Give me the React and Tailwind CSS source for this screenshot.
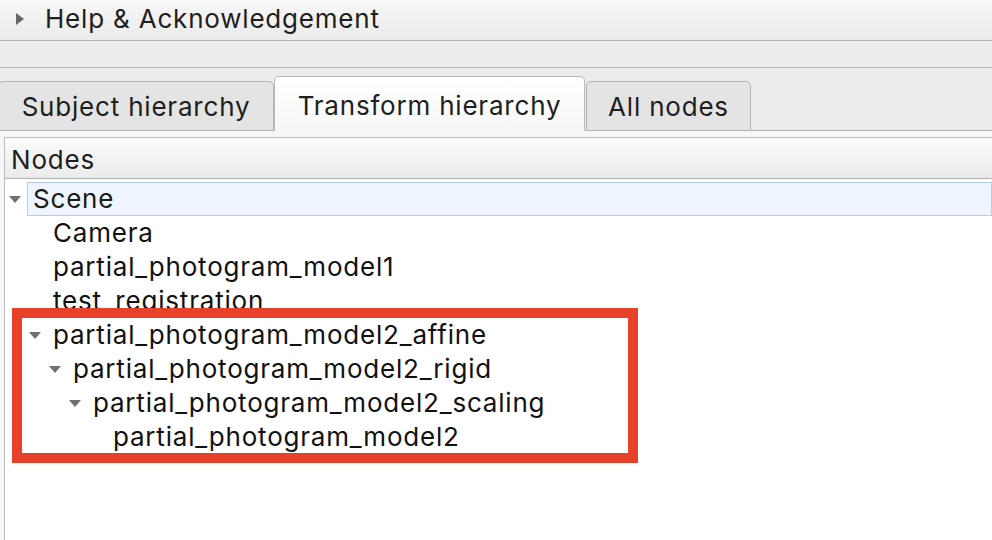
import React from 'react'

const FONT = { fontFamily: 'Inter, "Liberation Sans", sans-serif' }

const ROWS = [
  { label: 'Scene', level: 0, open: true, selected: true },
  { label: 'Camera', level: 1 },
  { label: 'partial_photogram_model1', level: 1 },
  { label: 'test_registration', level: 1 },
  { label: 'partial_photogram_model2_affine', level: 1, open: true },
  { label: 'partial_photogram_model2_rigid', level: 2, open: true },
  { label: 'partial_photogram_model2_scaling', level: 3, open: true },
  { label: 'partial_photogram_model2', level: 4 },
]

function DownArrow() {
  return (
    <svg width="12" height="7" viewBox="0 0 12 7" className="shrink-0">
      <path d="M0 0 L12 0 L6 7 Z" fill="#707070" />
    </svg>
  )
}

function Row({ row }) {
  const indent = row.level * 20
  return (
    <div className="flex items-center h-[34px]" style={{ paddingLeft: indent + 4 }}>
      <div className="w-[18px] flex items-center">{row.open && <DownArrow />}</div>
      {row.selected ? (
        <div className="flex-1 h-[34px] flex items-center pl-[5px] bg-[#eef5fe] border border-[#b4cdee] text-[#1a1a1a]">
          {row.label}
        </div>
      ) : (
        <div className="pl-[6px] text-[#111]">{row.label}</div>
      )}
    </div>
  )
}

export default function App() {
  return (
    <div
      className="relative w-[992px] h-[540px] overflow-hidden bg-[#ececec] flex flex-col text-[26px] leading-none tracking-[0.8px]"
      style={FONT}
    >
      {/* collapsible header */}
      <div className="h-[41px] shrink-0 flex items-center border-b border-[#b3b3b3] bg-gradient-to-b from-[#f7f7f7] to-[#ebebeb]">
        <svg width="8" height="12" viewBox="0 0 8 12" className="ml-[16px] mr-[21px] mt-[-2px]">
          <path d="M0 0 L8 6 L0 12 Z" fill="#666" />
        </svg>
        <span className="text-[#1e1e1e] mt-[-2px]">Help &amp; Acknowledgement</span>
      </div>
      <div className="h-[27px] shrink-0 border-b border-[#b8b8b8] bg-[#ececec]" />

      {/* tabs */}
      <div className="h-[63px] shrink-0 flex items-end">
        <div className="-ml-[2px] w-[276px] h-[50px] flex items-center justify-center pt-[2px] bg-[#e4e4e4] border border-[#b2b2b2] rounded-t-[5px] text-[#1e1e1e]">
          Subject hierarchy
        </div>
        <div className="w-[311px] h-[55px] flex items-center justify-center pt-[4px] bg-gradient-to-b from-white to-[#f7f7f7] border border-b-0 border-[#b8b8b8] rounded-t-[5px] text-[#1e1e1e]">
          Transform hierarchy
        </div>
        <div className="ml-[1px] w-[165px] h-[50px] flex items-center justify-center pt-[2px] bg-[#e4e4e4] border border-[#b2b2b2] rounded-t-[5px] text-[#1e1e1e]">
          All nodes
        </div>
        <div className="flex-1 h-[1px] bg-[#b2b2b2]" />
      </div>

      {/* tab body */}
      <div className="flex-1 bg-[#f7f7f7] pt-[6px] pl-[4px]">
        <div className="h-full bg-white border-l border-t border-[#bdbdbd]">
          <div className="h-[41px] flex items-center pl-[6px] pt-[4px] border-b border-[#b0b0b0] bg-gradient-to-b from-[#fbfbfb] to-[#ebebeb] text-[#1e1e1e]">
            Nodes
          </div>
          <div className="pt-[3px]">
            {ROWS.map((r) => (
              <Row key={r.label} row={r} />
            ))}
          </div>
        </div>
      </div>

      {/* annotation box */}
      <div className="absolute left-[12px] top-[308px] w-[626px] h-[155px] border-[10px] border-[#e8412a]" />
    </div>
  )
}
